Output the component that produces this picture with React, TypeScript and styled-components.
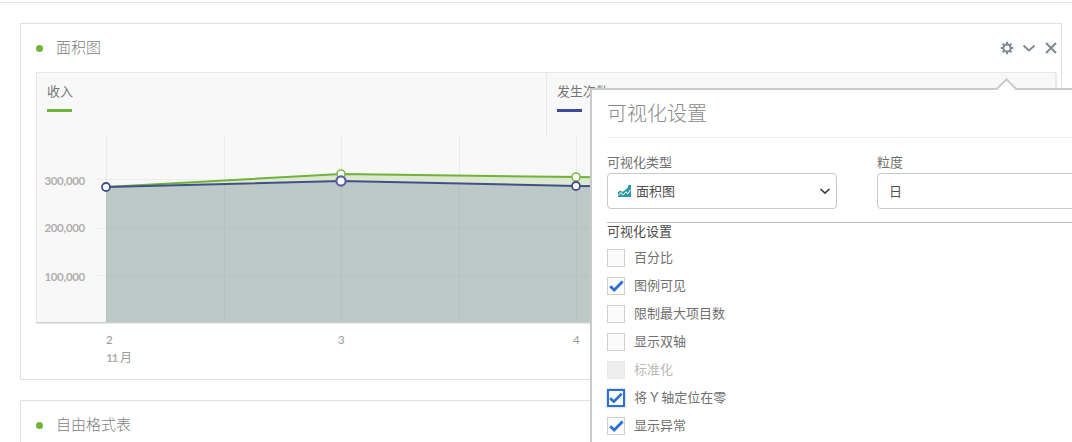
import React from 'react';
import styled, { createGlobalStyle } from 'styled-components';

const Global = createGlobalStyle`
  html, body { margin: 0; padding: 0; background: #fff; }
  body { font-family: Lato, "Noto Sans CJK SC", sans-serif; font-size: 13px; color: #6e6e6e; }
`;

const Page = styled.div`
  position: relative;
  width: 1072px;
  height: 442px;
  overflow: hidden;
  background: #fff;
`;
const TopRule = styled.div`
  height: 2px;
  border-bottom: 1px solid #e4e4e4;
  margin-bottom: 20px;
`;
const Card = styled.section<{ $height: number; $raised?: boolean }>`
  position: relative;
  z-index: ${p => (p.$raised ? 2 : 1)};
  box-sizing: border-box;
  width: 1042px;
  height: ${p => p.$height}px;
  margin: 0 0 20px 20px;
  border: 1px solid #e1e1e1;
  background: #fff;
`;
const CardHeader = styled.header`
  display: flex;
  align-items: center;
  height: 48px;
  padding: 0 3px 0 15px;
`;
const Dot = styled.span`
  width: 7px;
  height: 7px;
  border-radius: 50%;
  background: #71b536;
  margin-right: 13px;
`;
const CardTitle = styled.h2`
  flex: 1;
  margin: 0 0 2px;
  font-size: 15px;
  font-weight: 300;
  line-height: 20px;
  color: #808080;
`;
const HeaderIcons = styled.div`
  display: flex;
  align-items: center;
  gap: 8px;
`;
const ChartBox = styled.div`
  margin: 0 5px 0 15px;
`;
const Legend = styled.div`
  display: flex;
  box-sizing: border-box;
  height: 64px;
  background: #f8f8f8;
  border: 1px solid #e8e8e8;
  border-bottom: 0;
`;
const LegendItem = styled.div`
  flex: none;
  box-sizing: border-box;
  width: 510px;
  height: 63px;
  padding: 10px 10px 0;
  border-right: 1px solid #e8e8e8;
`;
const LegendLabel = styled.div`
  font-size: 13px;
  line-height: 17px;
  color: #757575;
`;
const LegendBar = styled.div<{ $color: string }>`
  width: 25px;
  height: 3px;
  margin-top: 9px;
  background: ${p => p.$color};
`;
const ChartSvg = styled.svg`
  display: block;
  font-family: Lato, "Noto Sans CJK SC", sans-serif;
  font-size: 11.5px;
`;
const Panel = styled.aside`
  position: absolute;
  left: 569px;
  top: 64px;
  box-sizing: border-box;
  width: 560px;
  height: 420px;
  padding: 0 0 0 15px;
  background: #fff;
  border: 2px solid #cacaca;
`;
const PanelArrow = styled.span`
  position: absolute;
  left: 407px;
  top: -9px;
  width: 15px;
  height: 15px;
  box-sizing: border-box;
  background: #fff;
  border-top: 2px solid #cacaca;
  border-left: 2px solid #cacaca;
  transform: rotate(45deg);
`;
const PanelTitle = styled.h3`
  box-sizing: border-box;
  height: 48px;
  margin: 0;
  font-size: 20px;
  font-weight: 300;
  line-height: 46px;
  color: #8a8a8a;
  border-bottom: 1px solid #ececec;
`;
const Fields = styled.div`
  display: flex;
  gap: 40px;
  margin-top: 16px;
`;
const Field = styled.div`
  width: 230px;
`;
const FieldLabel = styled.div`
  height: 16px;
  line-height: 16px;
  font-size: 13px;
  color: #707070;
  margin-bottom: 3px;
`;
const SelectBox = styled.div`
  display: flex;
  align-items: center;
  box-sizing: border-box;
  height: 36px;
  padding: 0 5px 0 10px;
  border: 1px solid #c9c9c9;
  border-radius: 4px;
  font-size: 13px;
  color: #4f4f4f;
  background: #fff;
`;
const SelectText = styled.span`
  flex: 1;
  margin: 0 0 2px 5px;
`;
const GrainText = styled.span`
  margin: 0 0 2px 1px;
`;
const Divider = styled.div`
  height: 1px;
  margin-top: 13px;
  background: #bdbdbd;
`;
const SectionHeading = styled.div`
  height: 18px;
  line-height: 16px;
  margin-bottom: 3px;
  font-size: 13px;
  color: #4b4b4b;
`;
const CheckRow = styled.label`
  display: flex;
  align-items: center;
  height: 28px;
  gap: 9px;
`;
const CheckBox = styled.span<{ $disabled?: boolean; $focused?: boolean }>`
  display: flex;
  align-items: center;
  justify-content: center;
  box-sizing: border-box;
  width: 18px;
  height: 18px;
  background: ${p => (p.$disabled ? '#eeeeee' : '#fbfbfb')};
  border: ${p => (p.$focused ? '2px solid #2d6fd0' : p.$disabled ? '1px solid #e8e8e8' : '1px solid #cfcfcf')};
  box-shadow: ${p => (p.$focused ? '0 0 2px rgba(45,111,208,.5)' : 'none')};
`;
const CheckLabel = styled.span<{ $disabled?: boolean }>`
  font-size: 13px;
  line-height: 18px;
  padding-bottom: 2px;
  color: ${p => (p.$disabled ? '#b9b9b9' : '#707070')};
`;

const Gear = () => (
  <svg width="14" height="14" viewBox="0 0 14 14" fill="none" stroke="#7f8790">
    <circle cx="7" cy="7" r="3.6" strokeWidth="2" />
    <path strokeWidth="2" d="M7 .8V3M7 11v2.2M.8 7H3M11 7h2.2M2.6 2.6l1.6 1.6M9.8 9.8l1.6 1.6M2.6 11.4l1.6-1.6M9.8 4.2l1.6-1.6" />
  </svg>
);
const Chevron = () => (
  <svg width="14" height="14" viewBox="0 0 14 14" fill="none" stroke="#7f8790" strokeWidth="1.8">
    <path d="M1.5 4.5 7 9.5l5.5-5" />
  </svg>
);
const Cross = () => (
  <svg width="14" height="14" viewBox="0 0 14 14" fill="none" stroke="#7f8790" strokeWidth="2">
    <path d="M2 2l10 10M12 2 2 12" />
  </svg>
);
const AreaIcon = () => (
  <svg width="13" height="12" viewBox="0 0 13 12">
    <path d="M0 12V7l2.5-1.5L4.5 7 9.5 3l1-3L13 0V12z" fill="#2b9aa6" />
    <path d="M.5 10.5 3 7.5l2.2 2.6 2.8-3.4 1.6 2.4 2.9-4.4" fill="none" stroke="#fff" strokeWidth="1" />
  </svg>
);
const SmallChevron = () => (
  <svg width="12" height="12" viewBox="0 0 12 12" fill="none" stroke="#3c3c3c" strokeWidth="1.6">
    <path d="M1.5 4 6 8.2 10.5 4" />
  </svg>
);
const Tick = () => (
  <svg width="15" height="12" viewBox="0 0 15 12" fill="none" stroke="#2d6fd0" strokeWidth="2.8">
    <path d="M1.2 6.2 5.2 10 13.6 1.4" />
  </svg>
);

const OX = 36;
const OY = 136;
const pts = [106, 341, 576, 811, 1046];
const green = [187, 174, 177, 180, 178];
const blue = [187, 181, 186, 188, 186];
const px = (x: number) => x - OX;
const py = (y: number) => y - OY;
const line = (ys: number[]) => pts.map((x, i) => `${px(x)},${py(ys[i])}`).join(' ');
const base = py(322);
const vGrid = [106, 224, 341, 459, 576, 694, 811, 929, 1046];
const hGrid = [179, 228, 275];
const yLabels = [['300,000', 185], ['200,000', 232], ['100,000', 281]] as const;

const Chart = () => (
  <ChartSvg width="1020" height="243" viewBox="0 0 1020 243">
    <rect x="0" y="0" width="1020" height={base} fill="#f8f8f8" />
    <path d="M.5 0V186M1019.5 0V186" stroke="#e8e8e8" />
    {vGrid.map(x => <line key={x} x1={px(x) + 0.5} x2={px(x) + 0.5} y1="0" y2={base} stroke="#e9e9e9" />)}
    {hGrid.map(y => <line key={y} x1={px(97)} x2="1020" y1={py(y) + 0.5} y2={py(y) + 0.5} stroke="#ececec" />)}
    <polygon points={`${px(106)},${base} ${line(green)} ${px(1046)},${base}`} fill="#dce9d0" />
    <polygon points={`${px(106)},${base} ${line(blue)} ${px(1046)},${base}`} fill="#bcc9c6" />
    {vGrid.map(x => <line key={x} x1={px(x) + 0.5} x2={px(x) + 0.5} y1={py(185)} y2={base} stroke="#aebcb9" strokeOpacity="0.6" />)}
    {hGrid.slice(1).map(y => <line key={y} x1={px(106)} x2="1020" y1={py(y) + 0.5} y2={py(y) + 0.5} stroke="#b3c0bd" strokeOpacity="0.6" />)}
    <polyline points={line(green)} fill="none" stroke="#6fb33a" strokeWidth="2" />
    <polyline points={line(blue)} fill="none" stroke="#425089" strokeWidth="2" />
    {pts.slice(1).map((x, i) => (
      <circle key={x} cx={px(x)} cy={py(green[i + 1])} r="4" fill="#fff" stroke="#7dba4c" strokeWidth="1.6" />
    ))}
    {pts.map((x, i) => (
      <circle key={x} cx={px(x)} cy={py(blue[i])} r={i === 1 ? 4.6 : 4} fill="#fff" stroke={i === 1 ? '#5b60a8' : '#425089'} strokeWidth={i === 1 ? 2.2 : 1.8} />
    ))}
    <rect x="0" y={base} width="1020" height="1.5" fill="#cfcfcf" />
    {yLabels.map(([t, y]) => (
      <text key={t} x={px(85)} y={py(y)} textAnchor="end" fill="#b0aeae" fontWeight="700" letterSpacing="-0.3">{t}</text>
    ))}
    <text x={px(106)} y={py(344)} fill="#9a9a9a">2</text>
    <text x={px(338)} y={py(344)} fill="#9a9a9a">3</text>
    <text x={px(573)} y={py(344)} fill="#9a9a9a">4</text>
    <text x={px(106)} y={py(362)} fill="#9a9a9a" fontSize="12"><tspan fontWeight="700" fill="#b0aeae" letterSpacing="-1.5">11</tspan> 月</text>
  </ChartSvg>
);

const checks: { label: string; checked?: boolean; disabled?: boolean; focused?: boolean }[] = [
  { label: '百分比' },
  { label: '图例可见', checked: true },
  { label: '限制最大项目数' },
  { label: '显示双轴' },
  { label: '标准化', disabled: true },
  { label: '将 Y 轴定位在零', checked: true, focused: true },
  { label: '显示异常', checked: true },
];

export default function App() {
  return (
    <Page>
      <Global />
      <TopRule />
      <Card $height={357} $raised>
        <CardHeader>
          <Dot />
          <CardTitle>面积图</CardTitle>
          <HeaderIcons>
            <Gear />
            <Chevron />
            <Cross />
          </HeaderIcons>
        </CardHeader>
        <ChartBox>
          <Legend>
            <LegendItem>
              <LegendLabel>收入</LegendLabel>
              <LegendBar $color="#6fb33a" />
            </LegendItem>
            <LegendItem>
              <LegendLabel>发生次数</LegendLabel>
              <LegendBar $color="#3c4a9c" />
            </LegendItem>
          </Legend>
          <Chart />
        </ChartBox>
        <Panel>
          <PanelArrow />
          <PanelTitle>可视化设置</PanelTitle>
          <Fields>
            <Field>
              <FieldLabel>可视化类型</FieldLabel>
              <SelectBox>
                <AreaIcon />
                <SelectText>面积图</SelectText>
                <SmallChevron />
              </SelectBox>
            </Field>
            <Field>
              <FieldLabel>粒度</FieldLabel>
              <SelectBox>
                <GrainText>日</GrainText>
              </SelectBox>
            </Field>
          </Fields>
          <Divider />
          <SectionHeading>可视化设置</SectionHeading>
          {checks.map(c => (
            <CheckRow key={c.label}>
              <CheckBox $disabled={c.disabled} $focused={c.focused}>{c.checked && <Tick />}</CheckBox>
              <CheckLabel $disabled={c.disabled}>{c.label}</CheckLabel>
            </CheckRow>
          ))}
        </Panel>
      </Card>
      <Card $height={120}>
        <CardHeader>
          <Dot />
          <CardTitle>自由格式表</CardTitle>
        </CardHeader>
      </Card>
    </Page>
  );
}
